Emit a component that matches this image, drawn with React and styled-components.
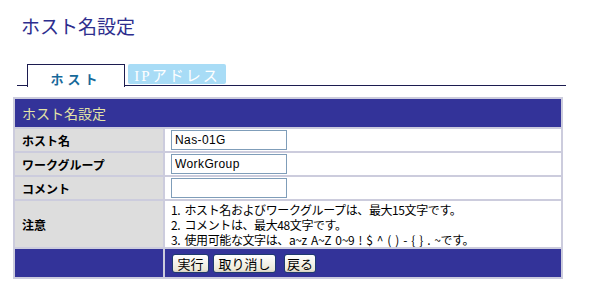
import React from "react";
import styled, { createGlobalStyle } from "styled-components";

/* Host name settings page — NAS admin style */

const GlobalStyle = createGlobalStyle`
  html, body {
    margin: 0;
    padding: 0;
    background: #ffffff;
  }
  body {
    font-family: "Noto Sans CJK JP", "Liberation Sans", sans-serif;
    color: #000;
  }
`;

const NAVY = "#333399";
const LAVENDER = "#ccccdd";

const Page = styled.div`
  width: 590px;
  height: 298px;
  overflow: hidden;
`;

const Title = styled.h1`
  margin: 0;
  padding: 12px 0 0 21px;
  height: 64px;
  box-sizing: border-box;
  font-size: 19px;
  line-height: 28px;
  font-weight: normal;
  color: #2e2e8e;
  font-family: "Noto Sans CJK JP", sans-serif;
`;

const TabBar = styled.div`
  display: flex;
  align-items: flex-start;
  margin-left: 17px;
  width: 549px;
  height: 22px;
  padding-left: 10px;
  box-sizing: border-box;
  border-bottom: 1px solid #1c1c50;
`;

const Tab = styled.div`
  box-sizing: border-box;
  width: 98px;
  height: ${({ $active }) => ($active ? "23px" : "20px")};
  margin-left: ${({ $active }) => ($active ? "0" : "3px")};
  display: flex;
  align-items: center;
  justify-content: center;
  letter-spacing: ${({ $active }) => ($active ? "4px" : "2px")};
  font-size: ${({ $active }) => ($active ? "13px" : "15px")};
  font-family: "Liberation Serif", "Noto Sans CJK JP", serif;
  background: ${({ $active }) => ($active ? "#ffffff" : "#a8dcf6")};
  color: ${({ $active }) => ($active ? "#17699a" : "#ffffff")};
  font-weight: ${({ $active }) => ($active ? "bold" : "normal")};
  border: ${({ $active }) => ($active ? "1px solid #1c1c50" : "none")};
  border-bottom: none;
  border-radius: ${({ $active }) => ($active ? "0" : "2px")};
  padding-top: ${({ $active }) => ($active ? "4px" : "0")};
  position: relative;
  z-index: 1;
`;

const Table = styled.div`
  margin: 11px 0 0 13px;
  width: 550px;
  box-sizing: border-box;
  display: grid;
  grid-template-columns: 148px 396px;
  grid-auto-rows: auto;
  gap: 2px;
  padding: 2px;
  background: ${LAVENDER};
`;

const Header = styled.div`
  grid-column: 1 / span 2;
  height: 28px;
  background: ${NAVY};
  color: #e4e4a6;
  font-size: 14px;
  line-height: 28px;
  padding-left: 7px;
`;

const Label = styled.div`
  height: ${({ $h }) => $h || 22}px;
  background: ${({ $dark }) => ($dark ? NAVY : "#dddddd")};
  display: flex;
  align-items: center;
  padding-left: 7px;
  font-size: 12px;
  font-weight: bold;
`;

const Value = styled.div`
  height: ${({ $h }) => $h || 22}px;
  background: ${({ $dark }) => ($dark ? NAVY : "#ffffff")};
  display: flex;
  align-items: center;
  padding-left: ${({ $pad }) => $pad ?? 6}px;
`;

const TextInput = styled.input`
  box-sizing: border-box;
  width: 116px;
  height: 20px;
  border: 1px solid #7f9db9;
  padding: 0 3px;
  font-family: "Liberation Sans", sans-serif;
  font-size: 12px;
  letter-spacing: 0.4px;
  color: #000;
  outline: none;
`;

const Notes = styled.div`
  font-size: 12px;
  letter-spacing: -0.4px;
  word-spacing: 2px;
  color: #000;
`;

const NoteLine = styled.div`
  height: 15px;
  line-height: 15px;
  white-space: nowrap;
`;

const ButtonRow = styled.div`
  display: flex;
  align-items: center;
  gap: 4px;
`;

const Button = styled.button`
  box-sizing: border-box;
  width: ${({ $w }) => $w}px;
  height: 19px;
  margin-left: ${({ $gap }) => $gap || 0}px;
  padding: 0;
  border: 1px solid #1f3a6e;
  border-radius: 3px;
  background: linear-gradient(#ffffff, #ece9d8 85%, #d6d0c0);
  font-family: "Noto Sans CJK JP", sans-serif;
  font-size: 13px;
  line-height: 17px;
  color: #000;
`;

const NOTES = [
  "1. ホスト名およびワークグループは、最大15文字です。",
  "2. コメントは、最大48文字です。",
  "3. 使用可能な文字は、a~z A~Z 0~9 ! $ ^ ( ) - { } . ~です。",
];

export default function App() {
  return (
    <Page>
      <GlobalStyle />
      <Title>ホスト名設定</Title>

      <TabBar>
        <Tab $active>ホスト</Tab>
        <Tab>IPアドレス</Tab>
      </TabBar>

      <Table>
        <Header>ホスト名設定</Header>

        <Label>ホスト名</Label>
        <Value>
          <TextInput defaultValue="Nas-01G" />
        </Value>

        <Label>ワークグループ</Label>
        <Value>
          <TextInput defaultValue="WorkGroup" />
        </Value>

        <Label>コメント</Label>
        <Value>
          <TextInput defaultValue="" />
        </Value>

        <Label $h={46}>注意</Label>
        <Value $h={46}>
          <Notes>
            {NOTES.map((n) => (
              <NoteLine key={n}>{n}</NoteLine>
            ))}
          </Notes>
        </Value>

        <Label $h={28} $dark />
        <Value $h={28} $dark $pad={7}>
          <ButtonRow>
            <Button $w={37}>実行</Button>
            <Button $w={63}>取り消し</Button>
            <Button $w={32} $gap={4}>戻る</Button>
          </ButtonRow>
        </Value>
      </Table>
    </Page>
  );
}
